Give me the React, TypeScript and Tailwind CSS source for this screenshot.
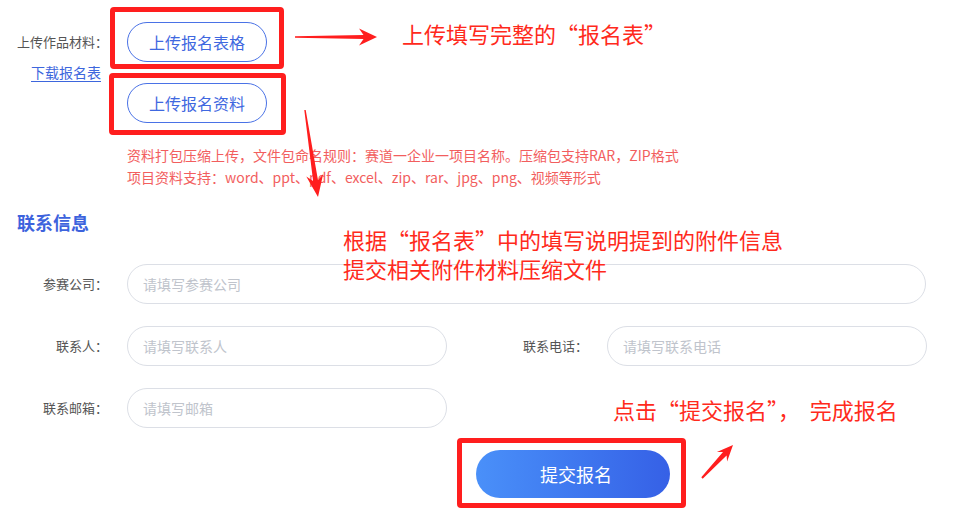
import React from "react";

function arrowPoints(
  x1: number, y1: number, x2: number, y2: number,
  tailW: number, shaftW: number, headL: number, headW: number
): string {
  const dx = x2 - x1, dy = y2 - y1;
  const len = Math.hypot(dx, dy);
  const ux = dx / len, uy = dy / len;
  const nx = -uy, ny = ux;
  const bx = x2 - ux * headL, by = y2 - uy * headL;
  const sx = x2 - ux * headL * 0.75, sy = y2 - uy * headL * 0.75;
  const p = (x: number, y: number) => `${x.toFixed(1)},${y.toFixed(1)}`;
  return [
    p(x1 + nx * tailW / 2, y1 + ny * tailW / 2),
    p(sx + nx * shaftW / 2, sy + ny * shaftW / 2),
    p(bx + nx * headW / 2, by + ny * headW / 2),
    p(x2, y2),
    p(bx - nx * headW / 2, by - ny * headW / 2),
    p(sx - nx * shaftW / 2, sy - ny * shaftW / 2),
    p(x1 - nx * tailW / 2, y1 - ny * tailW / 2),
  ].join(" ");
}

const font = "font-['Noto_Sans_CJK_SC','Microsoft_YaHei',sans-serif]";

function Field({ label, placeholder, labelW, inputW }: { label: string; placeholder: string; labelW: string; inputW: string }) {
  return (
    <div className="flex items-center">
      <div className={`${labelW} shrink-0 text-right text-[13px] text-[#555] leading-[40px]`}>{label}</div>
      <div className={`${inputW} ml-[19px] h-[40px] rounded-full border border-[#dcdfe6] flex items-center pl-[15px] text-[14px] text-[#c0c4cc]`}>
        {placeholder}
      </div>
    </div>
  );
}

export default function App() {
  return (
    <div className={`relative w-[968px] h-[511px] overflow-hidden bg-white ${font}`}>
      {/* form */}
      <div className="flex flex-col pt-[22px]">
        <div className="flex">
          <div className="w-[108px] shrink-0 flex flex-col items-end">
            <div className="h-[40px] leading-[40px] text-[13px] text-[#555]">上传作品材料：</div>
            <a className="mt-[1px] mr-[7px] text-[14px] leading-[18px] text-[#3d66dd] border-b border-[#3d66dd]">下载报名表</a>
          </div>
          <div className="ml-[19px] flex flex-col gap-[21px]">
            <div className="w-[140px] h-[40px] rounded-full border border-[#4a72e6] flex items-center justify-center text-[16px] text-[#3f68e0]">上传报名表格</div>
            <div className="w-[140px] h-[40px] rounded-full border border-[#4a72e6] flex items-center justify-center text-[16px] text-[#3f68e0]">上传报名资料</div>
          </div>
        </div>
        <div className="ml-[127px] mt-[21px] text-[14px] leading-[22px] text-[#f25e5e] whitespace-nowrap">
          <div>资料打包压缩上传，文件包命名规则：赛道一企业一项目名称。压缩包支持RAR，ZIP格式</div>
          <div>项目资料支持：word、ppt、pdf、excel、zip、rar、jpg、png、视频等形式</div>
        </div>
        <div className="ml-[17px] mt-[22px] text-[18px] leading-[24px] font-bold text-[#3d63dd]">联系信息</div>
        <div className="mt-[30px] flex flex-col gap-[22px]">
          <Field label="参赛公司：" placeholder="请填写参赛公司" labelW="w-[108px]" inputW="w-[799px]" />
          <div className="flex">
            <Field label="联系人：" placeholder="请填写联系人" labelW="w-[108px]" inputW="w-[320px]" />
            <Field label="联系电话：" placeholder="请填写联系电话" labelW="w-[141px]" inputW="w-[320px]" />
          </div>
          <Field label="联系邮箱：" placeholder="请填写邮箱" labelW="w-[108px]" inputW="w-[320px]" />
        </div>
        <div className="ml-[476px] mt-[22px] w-[194px] h-[48px] pl-[6px] rounded-full bg-gradient-to-r from-[#4a90f9] to-[#3660e6] flex items-center justify-center text-[18px] text-white">
          提交报名
        </div>
      </div>

      {/* annotation overlays */}
      <div className="absolute left-[110px] top-[7px] w-[174px] h-[62px] border-[5px] border-[#ff1e1e] rounded-[4px]" />
      <div className="absolute left-[109px] top-[73px] w-[177px] h-[62px] border-[5px] border-[#ff1e1e] rounded-[4px]" />
      <div className="absolute left-[457px] top-[438px] w-[229px] h-[70px] border-[5px] border-[#ff1e1e] rounded-[4px]" />

      <div className="absolute left-[402px] top-[18px] text-[22px] leading-[30px] text-[#ff2a1c] whitespace-nowrap">上传填写完整的“报名表”</div>
      <div className="absolute left-[343px] top-[225px] text-[22px] leading-[29px] text-[#ff2a1c] whitespace-nowrap">
        <div>根据“报名表”中的填写说明提到的附件信息</div>
        <div>提交相关附件材料压缩文件</div>
      </div>
      <div className="absolute left-[613px] top-[394px] text-[22px] leading-[30px] text-[#ff2a1c] whitespace-nowrap">点击“提交报名”，&nbsp;&nbsp;完成报名</div>

      <svg className="absolute inset-0 pointer-events-none" width="968" height="511">
        <polygon points={arrowPoints(295, 37, 377, 37, 1.5, 4, 18, 17)} fill="#ff1e1e" />
        <polygon points={arrowPoints(305, 110, 318, 197, 1.5, 5, 22, 17)} fill="#ff1e1e" />
        <polygon points={arrowPoints(702, 478, 733, 445, 2, 5, 16, 14)} fill="#ff1e1e" />
      </svg>
    </div>
  );
}
